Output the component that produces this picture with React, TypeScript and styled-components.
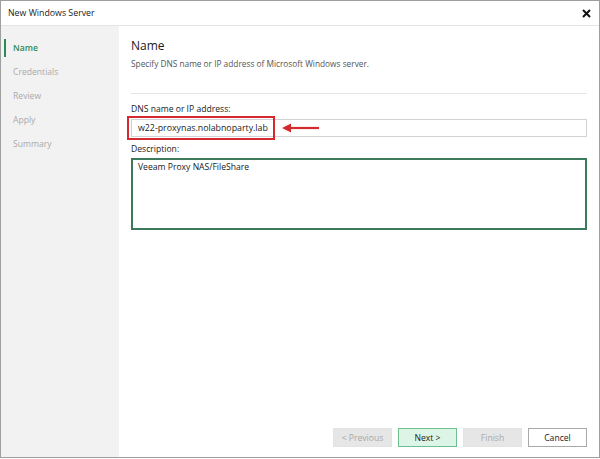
import React from 'react';
import styled, { createGlobalStyle } from 'styled-components';

const Global = createGlobalStyle`
  html, body {
    margin: 0;
    padding: 0;
    background: #ffffff;
  }
  body {
    font-family: 'Open Sans', 'Noto Sans', 'Liberation Sans', sans-serif;
    -webkit-font-smoothing: antialiased;
  }
`;

const Window = styled.div`
  width: 600px;
  height: 458px;
  box-sizing: border-box;
  border: 1px solid #9e9e9e;
  display: flex;
  flex-direction: column;
  background: #fff;
`;

const TitleBar = styled.div`
  height: 24px;
  flex: none;
  display: flex;
  align-items: center;
  justify-content: space-between;
  padding: 0 7px 0 7px;
  border-bottom: 1px solid #e4e4e4;
  font-size: 8.8px;
  color: #222;
`;

const CloseBtn = styled.div`
  width: 12px;
  height: 12px;
  display: flex;
  align-items: center;
  justify-content: center;
`;

const Body = styled.div`
  flex: 1;
  display: flex;
  min-height: 0;
`;

const Sidebar = styled.nav`
  width: 118px;
  flex: none;
  background: #f2f2f3;
  padding-top: 10px;
  display: flex;
  flex-direction: column;
`;

const NavItem = styled.div<{ $active?: boolean }>`
  position: relative;
  height: 24px;
  display: flex;
  align-items: center;
  padding-left: 12px;
  font-size: 8.6px;
  color: ${({ $active }) => ($active ? '#2f8a57' : '#a9a9a9')};
  font-weight: ${({ $active }) => ($active ? 600 : 400)};

  &::before {
    content: '';
    display: ${({ $active }) => ($active ? 'block' : 'none')};
    position: absolute;
    left: 3px;
    top: 3px;
    width: 2px;
    height: 18px;
    background: #2f8a57;
  }
`;

const Content = styled.section`
  flex: 1;
  display: flex;
  flex-direction: column;
  padding: 0 12px 0 12px;
  position: relative;
`;

const Heading = styled.h1`
  margin: 12px 0 0;
  font-size: 12px;
  line-height: 16px;
  font-weight: 400;
  color: #1a1a1a;
`;

const SubText = styled.p`
  margin: 3px 0 0;
  font-size: 8.3px;
  line-height: 13px;
  color: #555;
`;

const Separator = styled.hr`
  margin: 23px 0 0;
  border: none;
  height: 1px;
  background: #e4e4e4;
`;

const Label = styled.label<{ $gap: number }>`
  display: block;
  margin-top: ${({ $gap }) => $gap}px;
  font-size: 8.6px;
  line-height: 13px;
  color: #222;
`;

const FieldWrap = styled.div`
  position: relative;
  margin-top: 3px;
`;

const TextInput = styled.div`
  height: 18px;
  box-sizing: border-box;
  border: 1px solid #d3d3d3;
  padding-left: 6px;
  display: flex;
  align-items: center;
  font-size: 8.8px;
  color: #1a1a1a;
`;

const Highlight = styled.div`
  position: absolute;
  left: -4px;
  top: -3px;
  width: 148px;
  height: 24px;
  box-sizing: border-box;
  border: 2px solid #d42a2f;
`;

const Arrow = styled.svg`
  position: absolute;
  left: 151px;
  top: 3px;
`;

const TextArea = styled.div`
  margin-top: 2px;
  height: 72px;
  box-sizing: border-box;
  border: 2px solid #3d7a5b;
  padding: 2px 5px;
  font-size: 8.6px;
  line-height: 11px;
  color: #1a1a1a;
`;

const Footer = styled.div`
  margin-top: auto;
  margin-bottom: 10px;
  display: flex;
  justify-content: flex-end;
  gap: 6px;
`;

const Button = styled.div<{ $kind: 'disabled' | 'primary' | 'normal' }>`
  width: 59px;
  height: 19px;
  box-sizing: border-box;
  display: flex;
  align-items: center;
  justify-content: center;
  font-size: 8.6px;
  border: 1px solid
    ${({ $kind }) =>
      $kind === 'primary' ? '#6fbf8e' : $kind === 'normal' ? '#a9a9a9' : '#e3e3e3'};
  background: ${({ $kind }) =>
    $kind === 'primary' ? '#dcf5e6' : $kind === 'normal' ? '#ffffff' : '#e6e6e6'};
  color: ${({ $kind }) => ($kind === 'disabled' ? '#a8a8a8' : '#1a1a1a')};
`;

const steps = ['Name', 'Credentials', 'Review', 'Apply', 'Summary'];

export default function App(): React.JSX.Element {
  return (
    <>
      <Global />
      <Window>
        <TitleBar>
          <span>New Windows Server</span>
          <CloseBtn>
            <svg width="9" height="9" viewBox="0 0 9 9">
              <path d="M1 1 L8 8 M8 1 L1 8" stroke="#111" strokeWidth="2" />
            </svg>
          </CloseBtn>
        </TitleBar>
        <Body>
          <Sidebar>
            {steps.map((s, i) => (
              <NavItem key={s} $active={i === 0}>
                {s}
              </NavItem>
            ))}
          </Sidebar>
          <Content>
            <Heading>Name</Heading>
            <SubText>Specify DNS name or IP address of Microsoft Windows server.</SubText>
            <Separator />
            <Label $gap={9}>DNS name or IP address:</Label>
            <FieldWrap>
              <TextInput>w22-proxynas.nolabnoparty.lab</TextInput>
              <Highlight />
              <Arrow width="38" height="12" viewBox="0 0 38 12">
                <path d="M8 6 H37" stroke="#d42a2f" strokeWidth="2.2" />
                <path d="M0 6 L9 1.5 L9 10.5 Z" fill="#d42a2f" />
              </Arrow>
            </FieldWrap>
            <Label $gap={6}>Description:</Label>
            <TextArea>Veeam Proxy NAS/FileShare</TextArea>
            <Footer>
              <Button $kind="disabled">&lt; Previous</Button>
              <Button $kind="primary">Next &gt;</Button>
              <Button $kind="disabled">Finish</Button>
              <Button $kind="normal">Cancel</Button>
            </Footer>
          </Content>
        </Body>
      </Window>
    </>
  );
}
